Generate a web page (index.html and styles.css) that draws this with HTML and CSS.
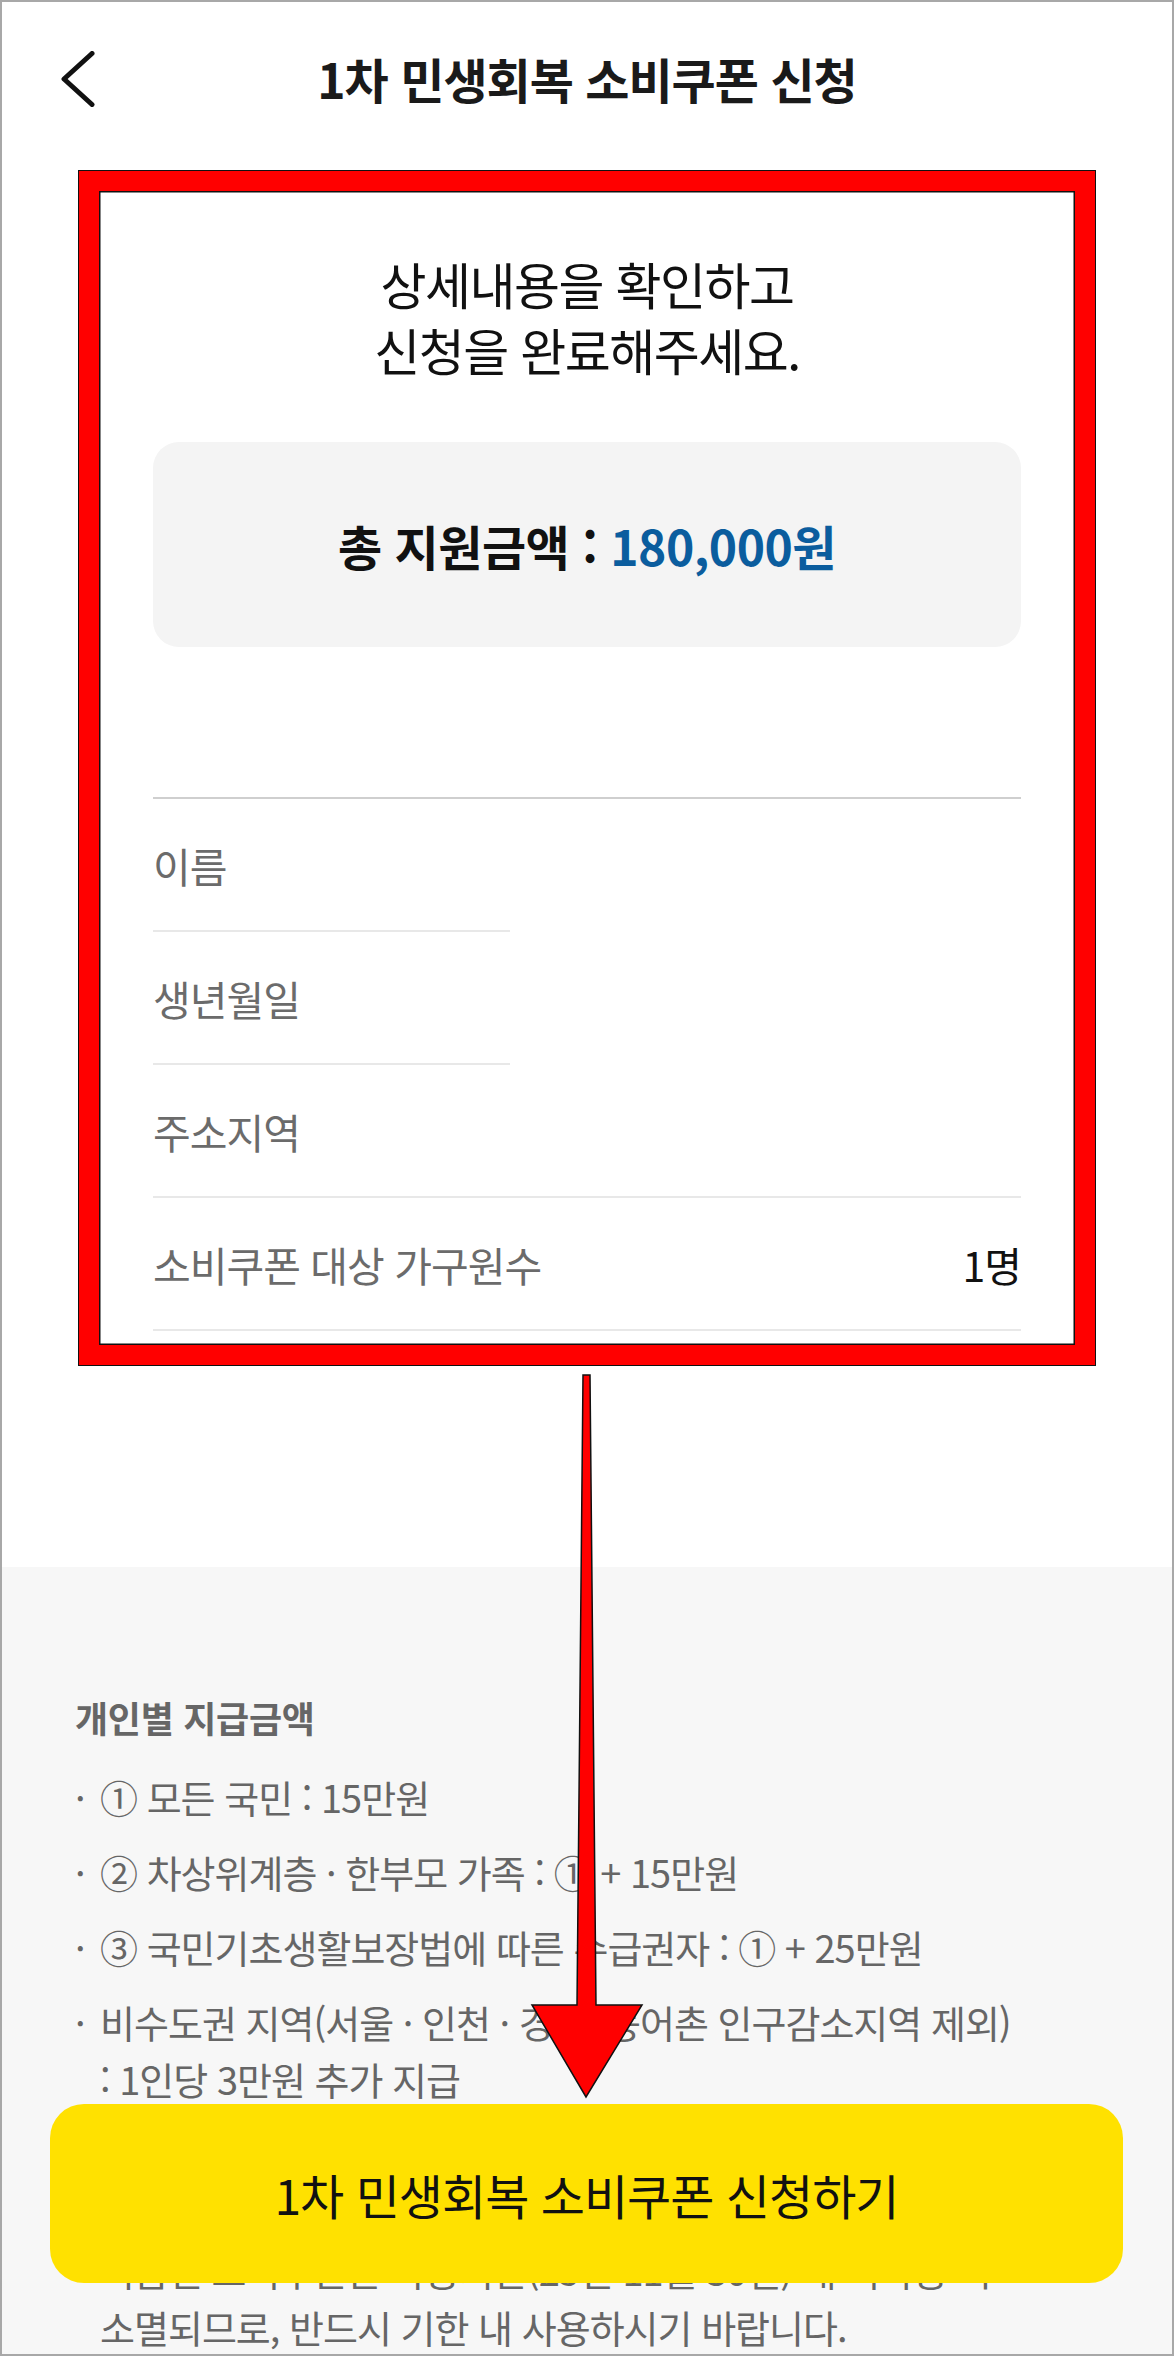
FILE: index.html
```html
<!DOCTYPE html>
<html lang="ko">
<head>
<meta charset="utf-8">
<title>1차 민생회복 소비쿠폰 신청</title>
<link rel="stylesheet" href="styles.css">
</head>
<body>
<div class="screen">
  <header class="topbar">
    <button class="back" aria-label="뒤로">
      <svg width="34" height="56" viewBox="0 0 34 56"><polyline points="31,2.5 3,28 31,53.5"/></svg>
    </button>
    <h1 class="title">1차 민생회복 소비쿠폰 신청</h1>
    <span class="spacer"></span>
  </header>

  <main class="confirm">
    <p class="lead">상세내용을 확인하고<br>신청을 완료해주세요.</p>
    <div class="total">총 지원금액 : <strong class="amount">180,000원</strong></div>
    <dl class="info">
      <div class="row short"><dt>이름</dt><dd></dd></div>
      <div class="row short"><dt>생년월일</dt><dd></dd></div>
      <div class="row"><dt>주소지역</dt><dd></dd></div>
      <div class="row"><dt>소비쿠폰 대상 가구원수</dt><dd>1명</dd></div>
    </dl>
  </main>

  <section class="notice">
    <h2 class="notice-title">개인별 지급금액</h2>
    <ul class="notice-list">
      <li><span class="dot">·</span><span>① 모든 국민 : 15만원</span></li>
      <li><span class="dot">·</span><span>② 차상위계층 · 한부모 가족 : ① + 15만원</span></li>
      <li><span class="dot">·</span><span>③ 국민기초생활보장법에 따른 수급권자 : ① + 25만원</span></li>
      <li><span class="dot">·</span><span>비수도권 지역(서울 · 인천 · 경기, 농어촌 인구감소지역 제외)<br>: 1인당 3만원 추가 지급</span></li>
      <li class="note"><span class="dot">·</span><span>지급된 소비쿠폰은 사용기한(25년 11월 30일) 내 미사용 시<br>소멸되므로, 반드시 기한 내 사용하시기 바랍니다.</span></li>
    </ul>
  </section>

  <button class="cta">1차 민생회복 소비쿠폰 신청하기</button>

  <div class="highlight" aria-hidden="true"></div>
  <svg class="arrow" width="140" height="740" viewBox="0 0 140 740" aria-hidden="true">
    <polygon points="63,7 70,7 76,637 122,637 66,729 12,637 57,637"/>
  </svg>
</div>
</body>
</html>
```

FILE: styles.css
```css
* { box-sizing: border-box; }

html, body {
  margin: 0;
  padding: 0;
  background: #ffffff;
}

body {
  font-family: "Noto Sans CJK KR", "Noto Sans", sans-serif;
  color: #111111;
}

.screen {
  position: relative;
  width: 1174px;
  height: 2356px;
  overflow: hidden;
  display: flex;
  flex-direction: column;
  background: #ffffff;
  outline: 2px solid #a8a8a8;
  outline-offset: -2px;
}

/* header */
.topbar {
  height: 160px;
  padding-bottom: 4px;
  display: grid;
  grid-template-columns: 1fr auto 1fr;
  align-items: center;
  flex: none;
}

.back {
  justify-self: start;
  margin-left: 61px;
  margin-top: 2px;
  padding: 0;
  border: 0;
  background: none;
  display: flex;
}

.back polyline {
  fill: none;
  stroke: #111111;
  stroke-width: 5;
  stroke-linecap: round;
  stroke-linejoin: round;
}

.title {
  margin: 0;
  font-size: 48px;
  font-weight: 700;
  letter-spacing: -1px;
  line-height: 1;
  color: #1a1a1a;
}

/* confirm section */
.confirm {
  flex: none;
  padding: 90px 153px 0;
  height: 1407px;
}

.lead {
  margin: 0;
  text-align: center;
  font-size: 50px;
  line-height: 66px;
  letter-spacing: -1.5px;
  font-weight: 400;
  color: #111111;
}

.total {
  margin-top: 60px;
  height: 205px;
  border-radius: 26px;
  background: #f4f4f4;
  display: flex;
  align-items: center;
  justify-content: center;
  font-size: 48px;
  font-weight: 700;
  letter-spacing: -0.5px;
  color: #111111;
  white-space: pre;
}

.amount {
  color: #0b5d9e;
  font-weight: 700;
}

.info {
  margin: 150px 0 0;
  border-top: 2px solid #cfcfcf;
}

.row {
  position: relative;
  height: 133px;
  padding-bottom: 2px;
  display: flex;
  align-items: center;
  justify-content: space-between;
}

.row::after {
  content: "";
  position: absolute;
  left: 0;
  right: 0;
  bottom: 0;
  height: 2px;
  background: #e8e8e8;
}

.row.short::after {
  right: auto;
  width: 357px;
}

.row dt {
  font-size: 41px;
  letter-spacing: -1px;
  color: #6b6b6b;
}

.row dd {
  margin: 0;
  font-size: 41px;
  letter-spacing: -1px;
  color: #111111;
}

/* notice section */
.notice {
  flex: 1;
  background: #f7f7f7;
  padding: 125px 75px 0;
  color: #666666;
}

.notice-title {
  margin: 0;
  font-size: 36px;
  line-height: 50px;
  font-weight: 700;
  letter-spacing: -0.3px;
  color: #666666;
}

.notice-list {
  list-style: none;
  margin: 26px 0 0;
  padding: 0;
}

.notice-list li {
  display: flex;
  font-size: 38px;
  line-height: 57px;
  letter-spacing: -1px;
  white-space: nowrap;
  margin-bottom: 18px;
}

.notice-list li.note {
  margin-top: 134px;
}

.dot {
  width: 25px;
  flex: none;
}

/* bottom call to action */
.cta {
  position: absolute;
  left: 50px;
  right: 51px;
  bottom: 73px;
  height: 179px;
  border: 0;
  border-radius: 34px;
  background: #ffe100;
  color: #111111;
  font-family: "Noto Sans CJK KR", "Noto Sans", sans-serif;
  font-size: 48px;
  letter-spacing: -1px;
  font-weight: 400;
  z-index: 1;
}

/* annotation overlay */
.highlight {
  position: absolute;
  top: 171px;
  left: 79px;
  width: 1016px;
  height: 1194px;
  border: 20px solid #ff0000;
  outline: 1.5px solid #111111;
  box-shadow: inset 0 0 0 1.5px #111111;
  z-index: 2;
  pointer-events: none;
}

.arrow {
  position: absolute;
  left: 520px;
  top: 1368px;
  z-index: 3;
  pointer-events: none;
}

.arrow polygon {
  fill: #ff0000;
  stroke: #111111;
  stroke-width: 1.5;
  stroke-linejoin: miter;
}
```
